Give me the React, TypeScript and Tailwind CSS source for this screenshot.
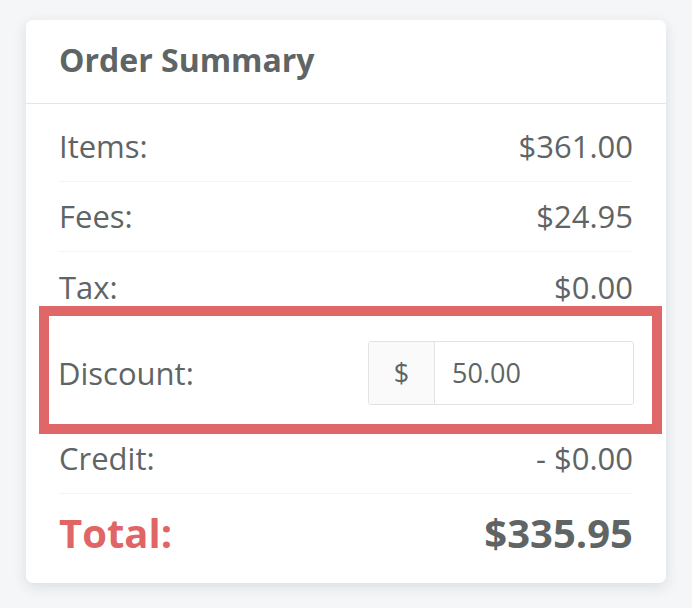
const ROWS = [
  { label: "Items:", value: "$361.00", border: true },
  { label: "Fees:", value: "$24.95", border: true },
  { label: "Tax:", value: "$0.00", border: false },
];

export default function App() {
  return (
    <div
      className="min-h-[608px] bg-[#f4f6f8] pt-5 pl-[26px]"
      style={{ fontFamily: '"Open Sans", "Noto Sans", sans-serif' }}
    >
      <div className="w-[640px] rounded-[7px] bg-white shadow-[0_4px_14px_rgba(40,50,60,0.12)] text-[#5f6465]">
        {/* Header */}
        <div className="h-[84px] flex items-center px-[33px] border-b border-[#e3e5e6]">
          <h2 className="text-[32px] font-bold leading-none -mt-[3px]">Order Summary</h2>
        </div>

        <div className="px-[33px] pt-2">
          {ROWS.map((row) => (
            <div
              key={row.label}
              className={`flex items-center justify-between h-[70px] text-[31px] ${
                row.border ? "border-b border-[#f4f4f4]" : ""
              }`}
            >
              <span>{row.label}</span>
              <span>{row.value}</span>
            </div>
          ))}

          {/* Discount row with annotation box */}
          <div className="relative flex items-center justify-between h-[102px] text-[31px]">
            <span className="-ml-px">Discount:</span>
            <div className="flex h-[64px] w-[266px] -mr-px border border-[#e2e4e4] rounded-[3px] text-[27px] overflow-hidden">
              <div className="w-[66px] flex items-center justify-center bg-[#fafafa] border-r border-[#e2e4e4]">
                $
              </div>
              <div className="flex-1 flex items-center pl-[17px]">50.00</div>
            </div>
            <div className="pointer-events-none absolute -left-[20px] -right-[29px] -top-[16px] -bottom-[10px] border-[10px] border-[#e06767]" />
          </div>

          <div className="flex items-center justify-between h-[70px] text-[31px] border-b border-[#f4f4f4]">
            <span>Credit:</span>
            <span>- $0.00</span>
          </div>

          <div className="flex items-center justify-between pt-[14px] pb-[25px]">
            <span className="text-[40px] leading-[50px] font-bold text-[#e06666]">Total:</span>
            <span className="text-[40px] leading-[50px] font-bold">$335.95</span>
          </div>
        </div>
      </div>
    </div>
  );
}
